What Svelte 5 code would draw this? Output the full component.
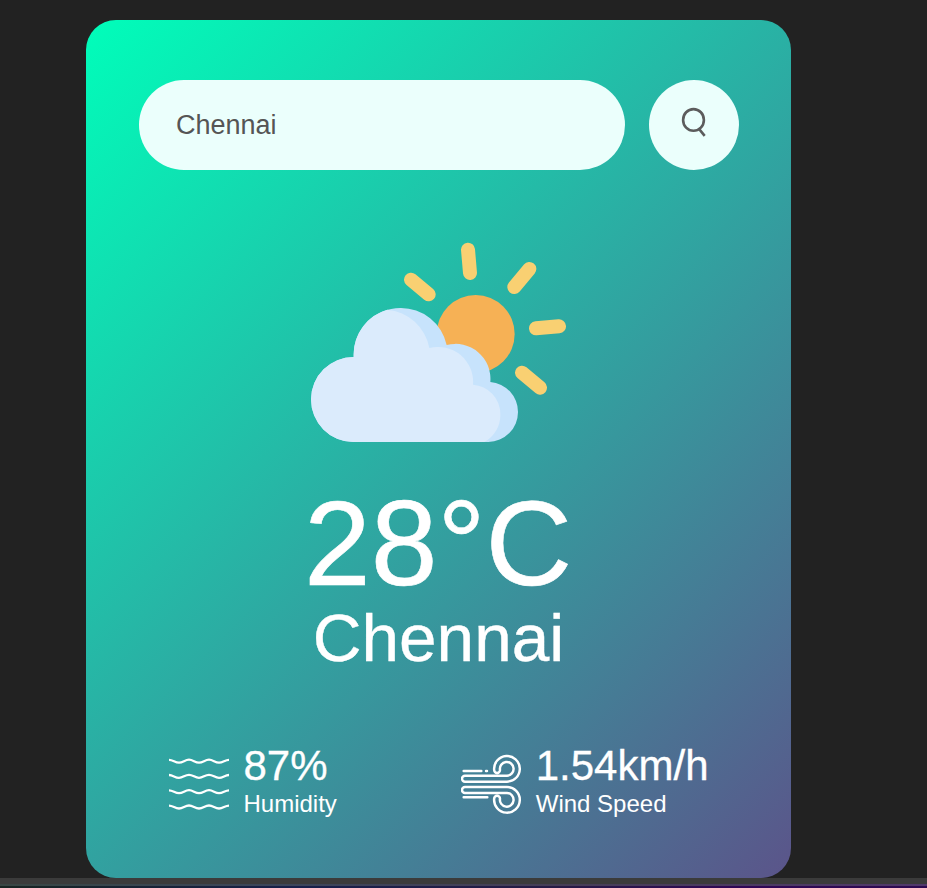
<script>
  let city = $state('Chennai');
  const weather = { temp: '28°C', name: 'Chennai', humidity: '87%', wind: '1.54km/h' };
  const waves = [0, 45.5, 91.5, 137.5];
</script>

<div class="page">
  <main class="card">
    <div class="search">
      <input type="text" bind:value={city} spellcheck="false" aria-label="City" />
      <button aria-label="Search">
        <svg class="lens" viewBox="0 0 26 30" fill="none" stroke="#5c5c5c" stroke-width="2.6">
          <ellipse cx="12.5" cy="12.9" rx="10.4" ry="10.8" />
          <path d="M17.8 21.7 L23.7 28.8" stroke-width="2.6" />
        </svg>
      </button>
    </div>

    <section class="weather">
      <svg class="weather-icon" viewBox="33 -45 765 765" aria-hidden="true">
        <circle cx="527" cy="312" r="117" fill="#f6b155" />
        <path
          d="M504 59L510 129M688 117L643 171M333 149L386 193M708 295L777 289M666 428L720 473"
          stroke="#f9d072" stroke-width="42" stroke-linecap="round"
        />
        <path
          d="M160 636A127 127 0 0 1 161 381V374A140 140 0 0 1 301 234A140 140 0 0 1 440 345A105 105 0 0 1 571 456A90 90 0 0 1 654 546A90 90 0 0 1 565 636Z"
          fill="#c7e3fc"
        />
        <path
          d="M160 636A127 127 0 0 1 161 381V374A140 140 0 0 1 262 239A141 141 0 0 1 388 354A105 105 0 0 1 519 464A88 88 0 0 1 601 552A92 92 0 0 1 553 636Z"
          fill="#dbebfc"
        />
      </svg>
      <h1>{weather.temp}</h1>
      <h2>{weather.name}</h2>
    </section>

    <section class="details">
      <div class="col">
        <svg viewBox="27 42 180 180" fill="none" stroke="#fff" stroke-width="6.8" aria-hidden="true">
          {#each waves as y}
            <path
              transform="translate(0 {y})"
              d="M27 59.5C39 59.5 45 68 57 68S75 59 87 59S105 68 117 68S135 59 147 59S165 68 177 68S195 59.5 207 59.5"
            />
          {/each}
        </svg>
        <div>
          <p class="value">{weather.humidity}</p>
          <p class="label">Humidity</p>
        </div>
      </div>
      <div class="col">
        <svg
          viewBox="33 27 180 180" fill="none" stroke="#fff" stroke-width="7.4"
          stroke-linecap="round" stroke-linejoin="round" aria-hidden="true"
        >
          <path d="M41 78H94M108 78H111M41 157H112" />
          <path d="M171 92H45A9 9 0 0 0 45 110H171A38.5 38.5 0 1 0 132.5 75A8.7 8.7 0 0 0 150 75A20.5 20.5 0 1 1 171 92Z" />
          <path d="M171 144H45A9 9 0 0 1 45 126H171A38.5 38.5 0 1 1 132.5 161A8.7 8.7 0 0 1 150 161A20.5 20.5 0 1 0 171 144Z" />
        </svg>
        <div>
          <p class="value">{weather.wind}</p>
          <p class="label">Wind Speed</p>
        </div>
      </div>
    </section>
  </main>
  <div class="scroll-edge"></div>
</div>

<style>
  :global(body) {
    background: #222;
    overflow: hidden;
  }
  .page, .page * {
    box-sizing: border-box;
    margin: 0;
    padding: 0;
    font-family: 'Liberation Sans', Arial, sans-serif;
  }
  .page {
    height: 888px;
    padding-top: 20px;
    display: flex;
    flex-direction: column;
  }
  .page .card {
    width: 705px;
    height: 858px;
    flex: none;
    margin-left: 86px;
    padding: 60px 52.5px 61px;
    border-radius: 30px;
    background: linear-gradient(135deg, #00feba, #5b548a);
    color: #fff;
    text-align: center;
    display: flex;
    flex-direction: column;
  }
  .search {
    display: flex;
    justify-content: space-between;
    gap: 24px;
  }
  .page .search input {
    flex: 1;
    min-width: 0;
    height: 90px;
    padding: 0 37.5px;
    border: 0;
    outline: 0;
    border-radius: 45px;
    background: #ebfffc;
    color: #555;
    font-size: 27px;
  }
  .page .search button {
    width: 90px;
    height: 90px;
    border: 0;
    border-radius: 50%;
    background: #ebfffc;
    display: flex;
    justify-content: center;
    padding-top: 27px;
  }
  .lens {
    width: 26px;
    height: 30px;
  }
  .weather {
    display: flex;
    flex-direction: column;
    align-items: center;
  }
  .page .weather-icon {
    width: 255px;
    height: 255px;
    margin-top: 45px;
  }
  .page h1 {
    margin: 4px 1px 0 0;
    font-size: 120px;
    font-weight: 500;
    line-height: 138px;
    -webkit-text-stroke: 0.6px #fff;
  }
  .page h2 {
    margin-top: -13px;
    font-size: 67.5px;
    font-weight: 500;
    line-height: 77px;
    -webkit-text-stroke: 0.4px #fff;
  }
  .page .details {
    display: flex;
    justify-content: space-between;
    margin-top: auto;
    padding: 0 30px;
  }
  .col {
    display: flex;
    align-items: center;
    text-align: left;
  }
  .page .col svg {
    width: 60px;
    height: 60px;
    margin: 8px 15px 0 0;
  }
  .value {
    font-size: 42px;
    line-height: 48px;
    -webkit-text-stroke: 0.3px #fff;
  }
  .label {
    font-size: 24px;
    line-height: 27px;
  }
  .scroll-edge {
    height: 10px;
    background:
      linear-gradient(#3b3b3b, #3b3b3b) 0 0 / 100% 6px no-repeat,
      linear-gradient(90deg, #394644, #3c465a 30%, #463e56 60%, #51396b) 0 6px / 100% 2px no-repeat,
      linear-gradient(90deg, #182522, #17204a 32%, #271b45 60%, #300655 80%, #2d0a50) 0 8px / 100% 2px no-repeat;
  }
</style>
